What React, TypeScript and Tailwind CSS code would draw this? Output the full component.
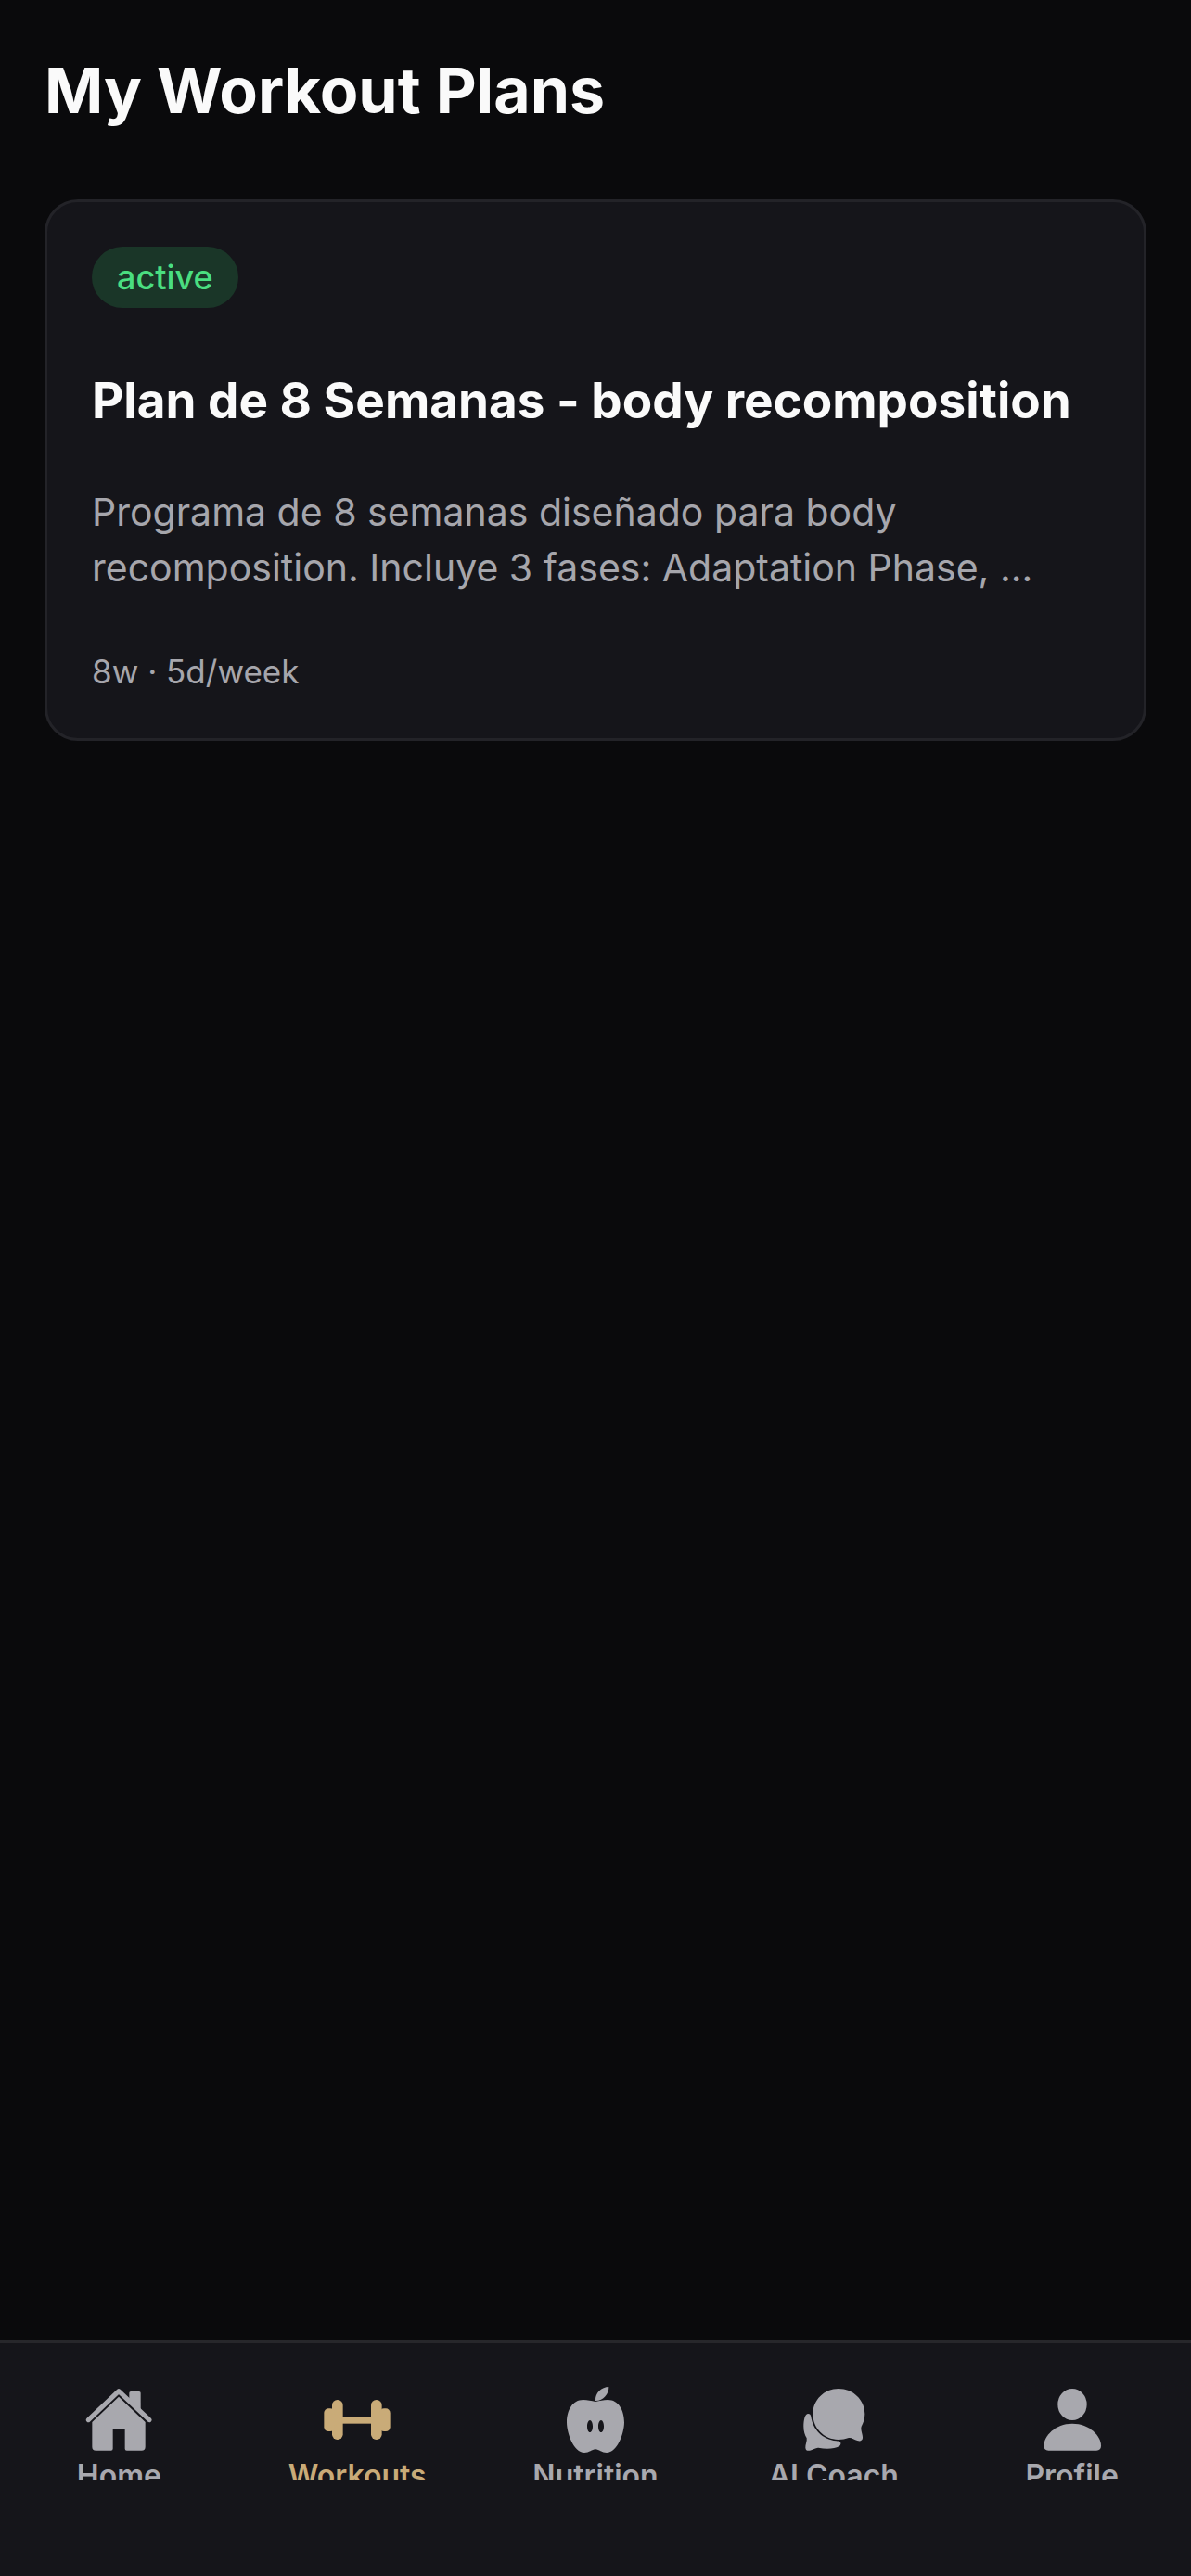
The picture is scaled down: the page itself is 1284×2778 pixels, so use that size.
import type { ReactNode } from "react";
import clsx from "clsx";

type Tab = {
  label: string;
  icon: ReactNode;
  active?: boolean;
};

const HomeIcon = () => (
  <svg viewBox="0 0 216 216" className="size-[72px]" fill="currentColor" aria-hidden="true">
    <path d="M142 50V20Q142 15 147 15H174Q179 15 179 20V84Z" />
    <path
      d="M10 107L108 14L207 107"
      fill="none"
      stroke="currentColor"
      strokeWidth="15"
      strokeLinecap="round"
      strokeLinejoin="round"
    />
    <path d="M108 32L194 114V194Q194 206 182 206H134Q128 206 128 200V135H89V200Q89 206 83 206H34Q22 206 22 194V114Z" />
  </svg>
);

const DumbbellIcon = () => (
  <svg viewBox="0 0 216 216" className="size-[72px]" fill="currentColor" aria-hidden="true">
    <rect x="1" y="70" width="34" height="74" rx="14" />
    <rect x="27" y="42" width="35" height="129" rx="17" />
    <rect x="58" y="96" width="98" height="23" />
    <rect x="153" y="42" width="35" height="129" rx="17" />
    <rect x="181" y="70" width="34" height="74" rx="14" />
  </svg>
);

const AppleIcon = () => (
  <svg viewBox="0 0 216 216" className="size-[72px]" fill="currentColor" aria-hidden="true">
    <path d="M108 45C106 18 128 1 151 0C152 22 132 46 108 45Z" />
    <path
      fillRule="evenodd"
      d="M108 48C95 45 82 42 68 42C34 42 15 75 15 115C15 150 38 213 72 213C88 213 96 203 108 202C120 203 128 213 144 213C178 213 201 150 201 115C201 75 182 42 148 42C134 42 121 45 108 48ZM90 108C85 108 81 117 81 128S85 147 90 147S99 139 99 128S95 108 90 108ZM126 108C121 108 117 117 117 128S121 147 126 147S135 139 135 128S131 108 126 108Z"
    />
  </svg>
);

const ChatIcon = () => (
  <svg viewBox="0 0 216 216" className="size-[72px]" fill="currentColor" aria-hidden="true">
    <path d="M123 6C170 6 208 42 208 88C208 104 203 118 197 128C193 138 203 158 201 166C200 175 192 177 184 174C174 171 164 163 156 165C146 169 134 171 123 171C76 171 40 134 40 88C40 42 77 6 123 6Z" />
    <path d="M25 87C14 87 10 108 10 128C10 144 14 156 20 166C22 176 15 188 16 197C17 205 22 208 30 206C40 204 50 196 58 197C84 203 112 200 124 193C131 190 132 182 128 178C125 175 121 176 116 175C70 170 40 138 34 96C33 90 30 87 25 87Z" />
  </svg>
);

const ProfileIcon = () => (
  <svg viewBox="0 0 216 216" className="size-[72px]" fill="currentColor" aria-hidden="true">
    <ellipse cx="108" cy="57" rx="47" ry="51" />
    <path d="M108 119C165 119 201 160 201 190C201 201 196 206 186 206H31C21 206 16 201 16 190C16 160 52 119 108 119Z" />
  </svg>
);

const tabs: Tab[] = [
  { label: "Home", icon: <HomeIcon /> },
  { label: "Workouts", icon: <DumbbellIcon />, active: true },
  { label: "Nutrition", icon: <AppleIcon /> },
  { label: "AI Coach", icon: <ChatIcon /> },
  { label: "Profile", icon: <ProfileIcon /> },
];

const PlanCard = () => {
  return (
    <article className="flex flex-col items-start rounded-[36px] border-3 border-[#232328] bg-[#15151a] p-12">
      <span className="rounded-full bg-[#1a3628] px-[27px] py-[9px] text-[36px] leading-[48px] font-medium text-[#4ade80]">
        active
      </span>
      <h2 className="mt-16 text-[53px] leading-[72px] font-bold text-[#fafafa]">
        Plan de 8 Semanas - body recomposition
      </h2>
      <p className="mt-[54px] text-[41px] leading-[60px] text-[#a6a6ac]">
        Programa de 8 semanas diseñado para body recomposition. Incluye 3
        fases: Adaptation Phase, ...
      </p>
      <p className="mt-[58px] text-[35px] leading-[48px] text-[#a6a6ac]">
        8w · 5d/week
      </p>
    </article>
  );
};

const TabBar = () => {
  return (
    <nav className="grid grid-cols-5 border-t-3 border-[#27272b] bg-[#15151a] pt-[47px] pb-[104px]">
      {tabs.map((tab) => (
        <button
          key={tab.label}
          type="button"
          className={clsx(
            "flex flex-col items-center gap-[6px]",
            tab.active ? "text-[#c9ab78]" : "text-[#a8a8ae]"
          )}
        >
          {tab.icon}
          <span className="h-[22px] overflow-hidden text-[32px] leading-[36px] font-semibold">
            {tab.label}
          </span>
        </button>
      ))}
    </nav>
  );
};

export default function App() {
  return (
    <div className="flex min-h-screen flex-col bg-[#0a0a0c] font-['Inter',sans-serif]">
      <main className="flex-1 px-12 pt-[49px]">
        <h1 className="mb-[70px] text-[68px] leading-[96px] font-bold text-[#fafafa]">
          My Workout Plans
        </h1>
        <PlanCard />
      </main>
      <TabBar />
    </div>
  );
}
